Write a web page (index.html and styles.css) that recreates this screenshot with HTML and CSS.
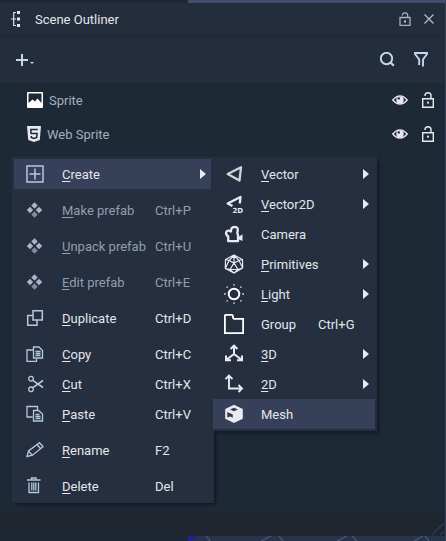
FILE: index.html
```html
<!DOCTYPE html>
<html lang="en">
<head>
<meta charset="utf-8">
<title>Scene Outliner</title>
<link rel="stylesheet" href="styles.css">
</head>
<body>
<svg class="defs" width="0" height="0">
  <symbol id="eye" viewBox="0 0 16 12"><path d="M.8 6Q8-2.200 15.200 6Q8 14.200.8 6z" fill="none" stroke="currentColor" stroke-width="1.400"/><circle cx="8" cy="6" r="3.700" fill="currentColor"/><circle cx="6.800" cy="4.400" r="1.200" fill="#1e2936"/></symbol>
  <symbol id="lock" viewBox="0 0 12 16"><path d="M.7 6.700h10.600v8.600H.7zM3 4V3.500Q3 .7 6 .7T9 3.500V6.500" fill="none" stroke="currentColor" stroke-width="1.400"/><circle cx="6" cy="10.700" r="1.100" fill="currentColor"/></symbol>
  <symbol id="prefab" viewBox="0 0 18 18"><path d="M8.500 1.300l3.200 3.200-3.200 3.200-3.200-3.200zM4 5.800L7.200 9 4 12.200.8 9zM13 5.800L16.200 9 13 12.200 9.800 9z" fill="#a9b6ca"/><path d="M8.500 10.300l3.200 3.200-3.200 3.200-3.200-3.200z" fill="#7f8b9d"/></symbol>
</svg>
<div class="window">
  <div class="strip top"></div>
  <header class="title">
    <svg class="tree" width="10" height="16" viewBox="0 0 10 16"><path d="M5 1.500H2.700v13H5M0 8h5" fill="none" stroke="#dcdfe8" stroke-width="1.200"/><path d="M6 0h3v3H6zM6 6.500h3v3H6zM6 13h3v3H6z" fill="#e9eaf1"/></svg>
    <span class="name">Scene Outliner</span>
    <svg class="titlelock" width="12" height="14" viewBox="0 0 12 14"><path d="M1 5.500h10v7.800H1zM3.300 3.500Q3.300.8 6 .8T8.700 3.500V5.500" fill="none" stroke="#a5b0c1" stroke-width="1.300"/><path d="M5 8.500h2v2H5z" fill="#c0cbdc"/></svg>
    <svg class="close" width="10" height="10" viewBox="0 0 10 10"><path d="M.5.5l9 9M9.500.5l-9 9" stroke="#b1bfd3" stroke-width="1.200"/></svg>
  </header>
  <div class="toolbar">
    <svg class="add" width="19" height="12" viewBox="0 0 19 12"><path d="M6 0v12M0 6h12" stroke="#c2d7f0" stroke-width="2"/><path d="M14 8h4l-2 2z" fill="#c2d7f0"/></svg>
    <svg class="search" width="15" height="15" viewBox="0 0 15 15"><circle cx="6.500" cy="6.500" r="5.700" fill="none" stroke="#c2d7f0" stroke-width="1.900"/><path d="M10.300 10.300l3.500 3.500" stroke="#c2d7f0" stroke-width="2.200"/></svg>
    <svg class="filter" width="14" height="15" viewBox="0 0 14 15"><path d="M5.200 13V7.500L1 2V1h12v1L9 7.500V14.500" fill="none" stroke="#c2d7f0" stroke-width="1.900"/></svg>
  </div>
  <main class="list">
    <div class="item"><svg class="itemicon" width="16" height="16" viewBox="0 0 16 16"><rect width="16" height="16" rx="1" fill="#fff"/><path d="M1.500 1.500h13V11L10.500 6.500 8 9.500 5.500 7.500 1.500 11z" fill="#1e2936"/></svg><span class="label sprite">Sprite</span><svg class="eye" width="16" height="12"><use href="#eye"/></svg><svg class="lock" width="12" height="16"><use href="#lock"/></svg></div>
    <div class="item"><svg class="itemicon web" width="14" height="16" viewBox="0 0 14 16"><path d="M0 0h14l-1.200 14L7 16l-5.800-2z" fill="#e7e7ee"/><path d="M10.800 3.500H3.800l.3 4h6l-.4 4L7 12.500l-2.700-1V10" fill="none" stroke="#1e2936" stroke-width="1.500"/></svg><span class="label">Web Sprite</span><svg class="eye" width="16" height="12"><use href="#eye"/></svg><svg class="lock" width="12" height="16"><use href="#lock"/></svg></div>
  </main>
  <footer class="status"><svg width="14" height="14" viewBox="0 0 14 14"><path d="M1 13L13 1M9 13l4-4" stroke="#34496a"/></svg></footer>
  <div class="strip bottom"><svg width="258" height="5" viewBox="0 0 258 5"><path d="M0 0h10L3 5H0z" fill="#1c209b"/><path d="M18 0l4 5M73 5l10-5M91 0l4 5M149 5l10-5M164 0l5 5M226 5l9-5M237 0l4 5" fill="none" stroke="#435a82" stroke-width="1.300"/></svg></div>
</div>

<div class="menu context">
  <div class="row active"><svg class="icon" viewBox="0 0 18 18"><path d="M1 1h16v16H1zM9 3.500v11M3.500 9h11" stroke-width="1.500"/></svg><span class="text"><u>C</u>reate</span><i class="arrow"></i></div>
  <div class="row dim gap"><svg class="icon"><use href="#prefab"/></svg><span class="text"><u>M</u>ake prefab</span><span class="key">Ctrl+P</span></div>
  <div class="row dim gap"><svg class="icon"><use href="#prefab"/></svg><span class="text"><u>U</u>npack prefab</span><span class="key">Ctrl+U</span></div>
  <div class="row dim gap"><svg class="icon"><use href="#prefab"/></svg><span class="text"><u>E</u>dit prefab</span><span class="key">Ctrl+E</span></div>
  <div class="row gap"><svg class="icon" viewBox="0 0 18 18"><path d="M7 1.700h9.300V11H7zM7 6.500H1.700v9.800H11V11" stroke-width="1.500"/></svg><span class="text"><u>D</u>uplicate</span><span class="key">Ctrl+D</span></div>
  <div class="row gap"><svg class="icon" viewBox="0 0 18 18"><path d="M7 5H1v11.300h9.500V14M7.500 2h5.500l3.500 3.500V13h-9zM9.500 6.500h5M9.500 8.500h5M9.500 10.500h5"/></svg><span class="text"><u>C</u>opy</span><span class="key">Ctrl+C</span></div>
  <div class="row"><svg class="icon" viewBox="0 0 18 18"><circle cx="5" cy="3.700" r="2.300"/><circle cx="5" cy="14.300" r="2.300"/><path d="M6.800 5.300L17 12.500M6.800 12.700L17 5.500" stroke-width="1.600"/></svg><span class="text"><u>C</u>ut</span><span class="key">Ctrl+X</span></div>
  <div class="row"><svg class="icon" viewBox="0 0 18 18"><path d="M6.500 12H1V1.500h10.500V5M7.500 5.500h5l4 3.500v7h-9zM9.500 9.500h4M9.500 11.500h5M9.500 13.500h5"/></svg><span class="text"><u>P</u>aste</span><span class="key">Ctrl+V</span></div>
  <div class="row gap"><svg class="icon" viewBox="0 0 18 18"><path d="M1 15.500L2.500 10 13.500 1.700l3.500 4L6.500 14.200zM2.500 10.200l4 4M11 3.500l3.700 4.200"/></svg><span class="text"><u>R</u>ename</span><span class="key">F2</span></div>
  <div class="row gap"><svg class="icon" viewBox="0 0 18 18"><path d="M1 3h13.500M5.500 2.500V1h4.500v1.500M3 5.500v10h9.500v-10M5.800 5.500v8M7.800 5.500v8M9.800 5.500v8"/></svg><span class="text"><u>D</u>elete</span><span class="key">Del</span></div>
</div>

<div class="menu sub">
  <div class="row"><svg class="icon" viewBox="0 0 20 20"><path d="M3.700 10L17 3.300l-1.500 13.200z" stroke="#cfd6d8" stroke-width="2.300" stroke-linejoin="round"/></svg><span class="text"><u>V</u>ector</span><i class="arrow"></i></div>
  <div class="row"><svg class="icon" viewBox="0 0 20 20"><path d="M8.500 12L3.700 9.500 16.500 3l-.7 6.500" stroke-width="2.300" stroke-linejoin="round"/><text x="8.500" y="18.500">2D</text></svg><span class="text"><u>V</u>ector2D</span><i class="arrow"></i></div>
  <div class="row"><svg class="icon" viewBox="0 0 20 20"><path d="M4.200 17.200V12.500Q1.500 10.500 2.200 8Q3.800 5.500 7 7.500Q6.800 3 10.500 2.800Q15.200 3 13.300 8.500L14 11.500V17.200z" stroke-width="2.300" stroke-linejoin="round"/><path d="M14.500 13l4-2.800v6.800l-4-1.800z" fill="#eceaf1" stroke="none"/></svg><span class="text">Camera</span></div>
  <div class="row"><svg class="icon" viewBox="0 0 20 20"><path d="M10 1l8.500 4.500.2 8.500L10 19l-8.700-4.500L1.500 5.500zM10 1v8M1.500 5.500L5 6.500 10 9l5-2.500 3.500-1M5 6.500L10 1.500l5 5M5 6.500L1.300 14.500M15 6.500l3.700 7.500M10 9l-4 6.500h8L10 9M1.300 14.500L6 15.500l4 3.500 4-3.500 4.700-1.500" stroke-width="1.200"/></svg><span class="text"><u>P</u>rimitives</span><i class="arrow"></i></div>
  <div class="row"><svg class="icon" viewBox="0 0 20 20"><circle cx="10" cy="10" r="5.300" stroke="#fff" stroke-width="1.900"/><path d="M9.300.2h1.400v1.400H9.300zM9.300 18.400h1.400v1.400H9.300zM.2 9.300h1.400v1.400H.2zM18.400 9.300h1.400v1.400h-1.400zM2.500 2.500h1.300v1.300H2.500zM16.200 2.500h1.300v1.300h-1.300zM2.500 16.200h1.300v1.300H2.500zM16.200 16.200h1.300v1.300h-1.300z" fill="#fff" stroke="none"/></svg><span class="text"><u>L</u>ight</span><i class="arrow"></i></div>
  <div class="row"><svg class="icon" viewBox="0 0 20 20"><path d="M.9 1.500Q.9.9 1.500.9H7.500Q9 .9 9 3T10.500 4.900H19.100V19.100H.9z" stroke="#fff" stroke-width="1.800"/></svg><span class="text">Group</span><span class="key">Ctrl+G</span></div>
  <div class="row"><svg class="icon" viewBox="0 0 20 20"><path d="M10 1.700V10L2.800 15.500M10 10L17.200 15.500M6.500 5L10 1.700 13.500 5M2 11.500V16.300H7M18 11.500V16.300H13" stroke-width="2"/></svg><span class="text"><u>3</u>D</span><i class="arrow"></i></div>
  <div class="row"><svg class="icon" viewBox="0 0 20 20"><path d="M5 2v12.500H17.500M1.500 5.200L5 1.700 8.500 5.200M14.500 11l3.500 3.500-3.500 3.500" stroke-width="1.900"/></svg><span class="text"><u>2</u>D</span><i class="arrow"></i></div>
  <div class="row active"><svg class="icon" viewBox="0 0 20 20"><path d="M10 .8l8.800 4.200v9.700L10 19l-8.800-4.300V5z" fill="#eceaf1" stroke="none"/><path d="M6 5.600L10 3.700l4 1.900-4 1.700zM3.300 8l5.500 2.500v3.200L6.300 12.500 3.300 13.500z" fill="#303a50" stroke="none"/></svg><span class="text">Mesh</span></div>
</div>
</body>
</html>
```
FILE: styles.css
```css
* { box-sizing: border-box; }
body {
  margin: 0;
  width: 446px;
  height: 541px;
  overflow: hidden;
  position: relative;
  font: 13px/28px Roboto, sans-serif;
  color: #e4e6ec;
  background: #1e2936;
}
svg { display: block; flex: none; }
.defs { position: absolute; }
.window { display: flex; flex-direction: column; height: 541px; border-right: 1px solid #34435a; }
.strip.top { height: 3px; background: linear-gradient(90deg, #1e2734 188px, #40506c 188px); }
.title { height: 33px; display: flex; align-items: center; padding: 0 11px; background: #232d3c; border-bottom: 1px solid #1d2633; }
.name { margin-left: 14px; flex: 1; padding-top: 2px; }
.titlelock { margin-right: 13px; }
.toolbar { height: 47px; display: flex; align-items: center; padding: 0 17px 0 16px; background: #232d3c; }
.search { margin-left: auto; margin-right: 19px; }
.list { height: 430px; background: #1e2936; }
.item { height: 34px; display: flex; align-items: center; padding: 0 11px 0 27px; color: #a2afc0; }
.label { margin-left: 6px; flex: 1; padding-top: 2px; }
.eye { color: #e9e8ef; margin-right: 14px; }
.lock { color: #e9e8ef; }
.status { height: 23px; background: #1f2630; display: flex; justify-content: flex-end; align-items: flex-end; }
.strip.bottom { height: 5px; background: linear-gradient(90deg, #1e2835 188px, #28344a 188px); padding-left: 188px; overflow: hidden; }

.menu { position: absolute; top: 157px; padding: 2px; background: #252f3f; box-shadow: 3px 3px 3px -1px #111923; }
.context { left: 12px; width: 202px; height: 346px; }
.sub { left: 211px; width: 166px; height: 274px; }
.row { height: 30px; display: grid; align-items: center; }
.context .row { grid-template-columns: 36px 93px 45px 8px; padding-left: 12px; width: 197px; }
.sub .row { grid-template-columns: 37px 57px 45px 8px; padding-left: 11px; }
.context .gap { margin-top: 6px; }
.row.active { background: #364058; }
.row.dim { color: #929eae; }
.text, .key { white-space: nowrap; padding-top: 2px; }
.text { grid-column: 2; }
.key { grid-column: 3; }
.arrow { grid-column: 4; width: 6px; height: 10px; background: #eceaf1; clip-path: polygon(0 0, 100% 50%, 0 100%); }
.icon { width: 18px; height: 18px; fill: none; stroke: #b4c8df; stroke-width: 1.3; }
.context .dim .icon { stroke: none; }
.sub .icon { width: 20px; height: 20px; stroke: #eceaf1; }
.icon text { font: bold 7px "DejaVu Sans", sans-serif; letter-spacing: -0.2px; fill: #eceaf1; stroke: none; }
u { text-decoration-thickness: 1px; text-underline-offset: 2px; text-decoration-skip-ink: none; }
```
